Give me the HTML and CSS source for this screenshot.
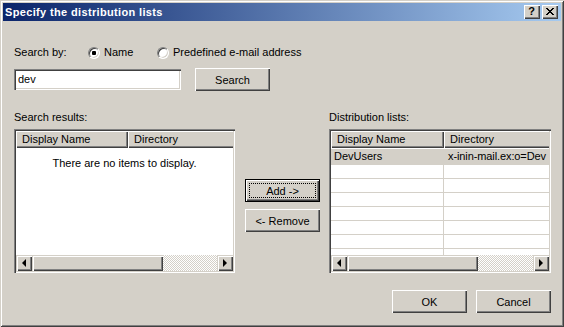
FILE: index.html
```html
<!DOCTYPE html>
<html lang="en">
<head>
    <meta charset="UTF-8">
    <title>Specify the distribution lists</title>
    <link rel="stylesheet" href="styles.css">
</head>
<body>

    <div class="window">

        <!-- Title Bar -->
        <div class="titlebar">
            <span class="title">Specify the distribution lists</span>
            <div class="caption-buttons">
                <button class="cap-btn">?</button>
                <button class="cap-btn">
                    <svg width="8" height="7" viewBox="0 0 8 7" shape-rendering="crispEdges">
                        <path fill="#000" d="M0 0h2v1H0zM6 0h2v1H6zM1 1h2v1H1zM5 1h2v1H5zM2 2h4v1H2zM3 3h2v1H3zM2 4h4v1H2zM1 5h2v1H1zM5 5h2v1H5zM0 6h2v1H0zM6 6h2v1H6z"/>
                    </svg>
                </button>
            </div>
        </div>

        <div class="content">

            <!-- Search By -->
            <div class="search-by">
                <span class="search-label">Search by:</span>
                <span class="radio-opt first"><span class="radio checked"></span>Name</span>
                <span class="radio-opt"><span class="radio"></span>Predefined e-mail address</span>
            </div>

            <div class="search-row">
                <div class="textbox">dev</div>
                <button class="btn">Search</button>
            </div>

            <!-- Lists -->
            <div class="lists">
                <div class="list-col left">
                    <div class="list-label">Search results:</div>
                    <div class="listview">
                        <div class="lv-header">
                            <div class="lv-hcell name">Display Name</div>
                            <div class="lv-hcell dir">Directory</div>
                        </div>
                        <div class="lv-body">
                            <div class="lv-empty">There are no items to display.</div>
                        </div>
                        <div class="scrollbar">
                            <div class="sb-btn"><span class="arrow-left"></span></div>
                            <div class="sb-thumb"></div>
                            <div class="sb-track"></div>
                            <div class="sb-btn"><span class="arrow-right"></span></div>
                        </div>
                    </div>
                </div>

                <div class="move-col">
                    <button class="btn default">Add -&gt;</button>
                    <button class="btn">&lt;- Remove</button>
                </div>

                <div class="list-col right">
                    <div class="list-label">Distribution lists:</div>
                    <div class="listview">
                        <div class="lv-header">
                            <div class="lv-hcell name wide">Display Name</div>
                            <div class="lv-hcell dir">Directory</div>
                        </div>
                        <div class="lv-body">
                            <div class="lv-row selected"><div class="lv-cell name wide">DevUsers</div><div class="lv-cell dir">x-inin-mail.ex:o=Dev</div></div>
                            <div class="lv-row"><div class="lv-cell name wide"></div><div class="lv-cell dir"></div></div>
                            <div class="lv-row"><div class="lv-cell name wide"></div><div class="lv-cell dir"></div></div>
                            <div class="lv-row"><div class="lv-cell name wide"></div><div class="lv-cell dir"></div></div>
                            <div class="lv-row"><div class="lv-cell name wide"></div><div class="lv-cell dir"></div></div>
                            <div class="lv-row"><div class="lv-cell name wide"></div><div class="lv-cell dir"></div></div>
                            <div class="lv-row"><div class="lv-cell name wide"></div><div class="lv-cell dir"></div></div>
                            <div class="lv-row"><div class="lv-cell name wide"></div><div class="lv-cell dir"></div></div>
                        </div>
                        <div class="scrollbar">
                            <div class="sb-btn"><span class="arrow-left"></span></div>
                            <div class="sb-thumb"></div>
                            <div class="sb-track"></div>
                            <div class="sb-btn"><span class="arrow-right"></span></div>
                        </div>
                    </div>
                </div>
            </div>

            <!-- Footer Buttons -->
            <div class="footer">
                <button class="btn">OK</button>
                <button class="btn">Cancel</button>
            </div>

        </div>
    </div>

</body>
</html>
```

FILE: styles.css
```css
* {
    margin: 0;
    padding: 0;
    box-sizing: border-box;
}

body {
    background: #d4d0c8;
    font-family: "Liberation Sans", Arial, sans-serif;
    font-size: 11px;
    color: #000;
    width: 564px;
    height: 327px;
    overflow: hidden;
}

/* Window frame */
.window {
    width: 564px;
    height: 327px;
    background: #d4d0c8;
    padding: 3px;
    box-shadow: inset 1px 1px #d4d0c8, inset -1px -1px #404040,
                inset 2px 2px #fff, inset -2px -2px #808080;
}

/* Title Bar */
.titlebar {
    height: 18px;
    background: linear-gradient(90deg, #0a246a, #a6caf0);
    display: flex;
    align-items: center;
    justify-content: space-between;
    padding: 0 3px 0 2px;
}

.title {
    color: #fff;
    font-weight: bold;
    font-size: 11px;
    letter-spacing: 0.35px;
}

.caption-buttons {
    display: flex;
    gap: 2px;
}

.cap-btn {
    width: 16px;
    height: 14px;
    border: none;
    background: #d4d0c8;
    box-shadow: inset 1px 1px #fff, inset -1px -1px #404040, inset -2px -2px #808080;
    font-family: inherit;
    font-size: 11px;
    font-weight: bold;
    line-height: 13px;
    display: flex;
    align-items: center;
    justify-content: center;
    padding: 0 1px 1px 0;
}

/* Content */
.content {
    padding: 0 10px 0 11px;
}

.search-by {
    margin-top: 25px;
    height: 13px;
    line-height: 13px;
    display: flex;
    align-items: center;
}

.search-label {
    width: 74px;
}

.radio-opt {
    display: flex;
    align-items: center;
    gap: 4px;
}

.radio-opt.first {
    width: 69px;
}

.radio {
    width: 12px;
    height: 12px;
    border-radius: 50%;
    background: #fff;
    border: 1px solid;
    border-color: #808080 #fff #fff #808080;
    box-shadow: inset 1px 1px #404040, inset -1px -1px #d4d0c8;
    position: relative;
}

.radio.checked::after {
    content: "";
    position: absolute;
    left: 3px;
    top: 3px;
    width: 4px;
    height: 4px;
    border-radius: 1px;
    background: #000;
}

.search-row {
    margin-top: 9px;
    height: 23px;
    display: flex;
    align-items: center;
    gap: 14px;
}

.textbox {
    width: 167px;
    height: 21px;
    background: #fff;
    padding: 4px 4px 0;
    box-shadow: inset 1px 1px #808080, inset 2px 2px #404040,
                inset -1px -1px #fff, inset -2px -2px #d4d0c8;
}

/* Buttons */
.btn {
    width: 75px;
    height: 23px;
    border: none;
    background: #d4d0c8;
    font-family: inherit;
    font-size: 11px;
    color: #000;
    box-shadow: inset 1px 1px #fff, inset -1px -1px #404040, inset -2px -2px #808080;
    position: relative;
}

.btn.default {
    box-shadow: inset 0 0 0 1px #000, inset 2px 2px #fff,
                inset -2px -2px #404040, inset -3px -3px #808080;
}

.btn.default::after {
    content: "";
    position: absolute;
    left: 4px;
    top: 4px;
    right: 4px;
    bottom: 4px;
    border: 1px dotted #000;
}

/* Lists */
.lists {
    margin-top: 20px;
    display: flex;
    align-items: flex-start;
}

.list-col.left {
    width: 221px;
}

.list-col.right {
    width: 222px;
    margin-left: 9px;
}

.list-label {
    height: 13px;
    line-height: 13px;
    margin-bottom: 5px;
}

.move-col {
    width: 75px;
    margin-left: 10px;
    padding-top: 68px;
    display: flex;
    flex-direction: column;
    gap: 7px;
}

.listview {
    height: 144px;
    background: #fff;
    padding: 2px;
    display: flex;
    flex-direction: column;
    overflow: hidden;
    box-shadow: inset 1px 1px #808080, inset 2px 2px #404040,
                inset -1px -1px #fff, inset -2px -2px #d4d0c8;
}

.lv-header {
    height: 17px;
    flex: none;
    display: flex;
    overflow: hidden;
}

.lv-hcell {
    height: 17px;
    line-height: 16px;
    padding-left: 6px;
    background: #d4d0c8;
    flex: none;
    white-space: nowrap;
    box-shadow: inset 1px 1px #fff, inset -1px -1px #404040, inset -2px -2px #808080;
}

.name {
    width: 112px;
}

.name.wide {
    width: 113px;
}

.lv-hcell.dir {
    width: 130px;
}

.lv-body {
    height: 107px;
    flex: none;
    overflow: hidden;
    padding-top: 1px;
}

.lv-empty {
    text-align: center;
    margin-top: 8px;
    line-height: 13px;
}

.lv-row {
    display: flex;
    height: 14px;
    border-bottom: 1px solid #d4d0c8;
    line-height: 13px;
}

.lv-row:first-child {
    height: 16px;
    line-height: 15px;
}

.lv-row.selected {
    background: #d4d0c8;
}

.lv-cell {
    flex: none;
    white-space: nowrap;
}

.lv-cell.name {
    padding-left: 3px;
    border-right: 1px solid #d4d0c8;
}

.lv-cell.dir {
    width: 105px;
    padding-left: 4px;
    letter-spacing: -0.1px;
}

/* Scrollbar */
.scrollbar {
    height: 16px;
    flex: none;
    display: flex;
}

.sb-btn {
    width: 16px;
    height: 16px;
    flex: none;
    background: #d4d0c8;
    display: flex;
    align-items: center;
    justify-content: center;
    box-shadow: inset 1px 1px #d4d0c8, inset 2px 2px #fff,
                inset -1px -1px #404040, inset -2px -2px #808080;
}

.sb-thumb {
    width: 131px;
    flex: none;
    background: #d4d0c8;
    box-shadow: inset 1px 1px #d4d0c8, inset 2px 2px #fff,
                inset -1px -1px #404040, inset -2px -2px #808080;
}

.sb-track {
    flex: 1;
    background: repeating-conic-gradient(#fff 0 25%, #d4d0c8 0 50%) 0 0 / 2px 2px;
}

.arrow-left {
    width: 0;
    height: 0;
    border-top: 4px solid transparent;
    border-bottom: 4px solid transparent;
    border-right: 4px solid #000;
    margin-right: 1px;
}

.arrow-right {
    width: 0;
    height: 0;
    border-top: 4px solid transparent;
    border-bottom: 4px solid transparent;
    border-left: 4px solid #000;
}

/* Footer */
.footer {
    margin-top: 17px;
    display: flex;
    justify-content: flex-end;
    gap: 9px;
}
```
